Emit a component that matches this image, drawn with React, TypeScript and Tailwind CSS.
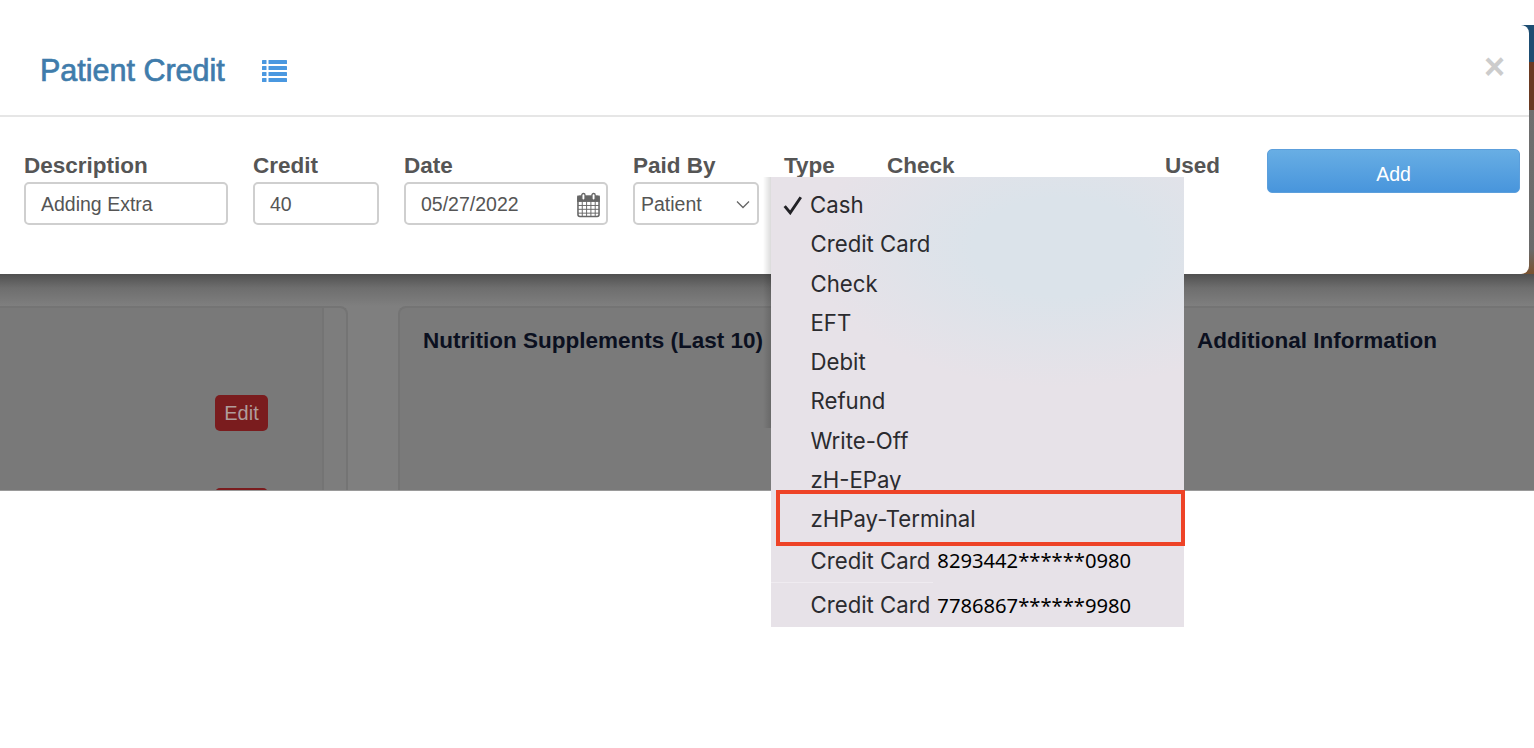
// App.tsx
// Patient Credit modal with the native Type select menu open.

import React from 'react';

const menuItems = ['Credit Card', 'Check', 'EFT', 'Debit', 'Refund', 'Write-Off', 'zH-EPay', 'zHPay-Terminal'];

const Label: React.FC<{ text: string; className?: string }> = ({ text, className }) => (
  <div className={`h-[29px] text-[22.5px] leading-[26px] font-bold text-[#555555] ${className ?? ''}`}>{text}</div>
);

const inputBox =
  'h-[43px] pt-[2px] rounded-[5px] border-2 border-[#cfcfcf] bg-white flex items-center text-[19.5px] text-[#555555]';

const CalendarIcon = () => (
  <svg width="23" height="26" viewBox="0 0 24 26" fill="none" stroke="#666666">
    <rect x="1" y="4" width="22" height="21" rx="2" strokeWidth="1.6" />
    <rect x="1" y="4" width="22" height="5" fill="#666666" strokeWidth="1.6" />
    <path d="M1 13.5H23M1 17.5H23M1 21.5H23M5.5 9V25M10 9V25M14.5 9V25M19 9V25" strokeWidth="1" />
    <rect x="5" y="1" width="3.4" height="7" rx="1.7" fill="#ffffff" strokeWidth="1.4" />
    <rect x="15.6" y="1" width="3.4" height="7" rx="1.7" fill="#ffffff" strokeWidth="1.4" />
  </svg>
);

const ListIcon = () => (
  <svg className="ml-[37px]" width="25" height="22" viewBox="0 0 25 22" fill="#4a98e0">
    <rect x="0" y="0" width="4.5" height="4" rx="0.6" />
    <rect x="0" y="6" width="4.5" height="4" rx="0.6" />
    <rect x="0" y="12" width="4.5" height="4" rx="0.6" />
    <rect x="0" y="18" width="4.5" height="4" rx="0.6" />
    <rect x="6.5" y="0" width="18.5" height="4" rx="0.6" />
    <rect x="6.5" y="6" width="18.5" height="4" rx="0.6" />
    <rect x="6.5" y="12" width="18.5" height="4" rx="0.6" />
    <rect x="6.5" y="18" width="18.5" height="4" rx="0.6" />
  </svg>
);

const App: React.FC = () => {
  return (
    <div className="relative w-[1534px] h-[748px] overflow-hidden bg-white font-['Liberation_Sans',Arial,sans-serif]">
      <div className="h-[25px]" />

      {/* Dimmed page behind the modal */}
      <div className="h-[466px] overflow-hidden bg-[#7f7f7f] border-b border-[#9a9a9a]">
        <div className="h-[249px] bg-[linear-gradient(to_bottom,#1d4d72_0,#1d4d72_37px,#6a3a22_37px,#6a3a22_85px,#6f6f6f_85px,#6a6a6a_225px,#7a5230_249px)]">
          <div className="w-[1529px] h-[249px] bg-white rounded-r-[8px]">
            <div className="h-[92px] border-b-2 border-[#e6e6e6] pt-[2px] pl-[40px] pr-[24px] flex items-center">
              <h1 className="text-[30.5px] font-normal text-[#3f7cab] [-webkit-text-stroke:0.7px_#3f7cab]">
                Patient Credit
              </h1>
              <ListIcon />
              <span className="ml-auto -mt-[8px] text-[36px] leading-none font-bold text-[#cccccc]">×</span>
            </div>

            <div className="flex items-start pl-[24px] pt-[36px]">
              <div className="w-[204px]">
                <Label text="Description" />
                <div className={`${inputBox} pl-[15px]`}>Adding Extra</div>
              </div>
              <div className="w-[126px] ml-[25px]">
                <Label text="Credit" />
                <div className={`${inputBox} pl-[15px]`}>40</div>
              </div>
              <div className="w-[204px] ml-[25px]">
                <Label text="Date" />
                <div className={`${inputBox} pl-[15px] pr-[6px] justify-between`}>
                  05/27/2022
                  <CalendarIcon />
                </div>
              </div>
              <div className="w-[126px] ml-[25px]">
                <Label text="Paid By" />
                <div className={`${inputBox} pl-[6px] pr-[6px] justify-between`}>
                  Patient
                  <svg width="16" height="9" viewBox="0 0 16 9" fill="none" stroke="#666666" strokeWidth="1.3">
                    <path d="M2 1.5L8 7.5L14 1.5" />
                  </svg>
                </div>
              </div>
              <Label text="Type" className="ml-[25px] w-[103px]" />
              <Label text="Check" className="w-[278px]" />
              <Label text="Used" className="w-[102px]" />
              <button className="w-[253px] h-[44px] -mt-[4px] pt-[8px] rounded-[5px] border border-[#5c9fdc] bg-[linear-gradient(to_bottom,#68aee4,#4895dc)] text-[19.5px] text-white">
                Add
              </button>
            </div>
          </div>
        </div>

        {/* Page content under the backdrop */}
        <div className="h-[216px] pt-[32px] flex items-start bg-[linear-gradient(to_bottom,#505050_0,#6e6e6e_14px,#7f7f7f_32px)]">
          <div className="w-[348px] h-[200px] flex rounded-tr-[8px] border-r-2 border-t-2 border-[#747474] bg-[#7d7d7d]">
            <div className="w-[324px] border-r-2 border-[#747474] bg-[#797979] flex flex-col items-end pr-[54px] pt-[87px] gap-[57px]">
              <span className="w-[53px] h-[36px] shrink-0 rounded-[5px] bg-[#7a1c1e] flex items-center justify-center text-[20px] text-[#b09c9c]">
                Edit
              </span>
              <span className="w-[53px] h-[36px] shrink-0 rounded-[5px] bg-[#7a1c1e]" />
            </div>
          </div>
          <div className="ml-[50px] flex-1 h-[200px] rounded-tl-[8px] border-l-2 border-t-2 border-[#747474] bg-[#7a7a7a] pl-[23px] pt-[20px] flex text-[22.5px] leading-[26px] font-bold text-[#0b1020]">
            <span className="w-[774px]">Nutrition Supplements (Last 10)</span>
            <span>Additional Information</span>
          </div>
        </div>
      </div>

      {/* Open select menu */}
      <div className="absolute left-[771px] top-[177px] w-[413px] h-[450px] pt-[8px] bg-[#e7e2e8] bg-[radial-gradient(ellipse_250px_140px_at_290px_70px,#dbe3ea_35%,#e7e2e8_100%)] font-['Inter',sans-serif] text-[22.2px] text-[#2b2b2f]">
        <div className="absolute -left-[8px] top-0 w-[8px] h-[251px] bg-[linear-gradient(to_right,rgba(0,0,0,0),rgba(0,0,0,0.14))]" />
        <div className="h-[39.3px] flex items-center">
          <svg className="ml-[12px] mr-[7px]" width="20" height="20" viewBox="0 0 18 18" fill="none" stroke="#222226" strokeWidth="2.6">
            <path d="M1.5 10L6.5 16L16 2" />
          </svg>
          Cash
        </div>
        {menuItems.map(item => (
          <div key={item} className="h-[39.3px] flex items-center pl-[39.5px]">
            {item}
          </div>
        ))}
        <div className="h-[43px] flex items-center pl-[39.5px]">
          Credit Card
          <span className="ml-[7px] font-['Noto_Sans',sans-serif] text-[20.2px] text-black">8293442******0980</span>
        </div>
        <div className="h-px w-[162px] -mb-px bg-[#efebf0]" />
        <div className="h-[46px] flex items-center pl-[39.5px]">
          Credit Card
          <span className="ml-[7px] font-['Noto_Sans',sans-serif] text-[20.2px] text-black">7786867******9980</span>
        </div>
      </div>

      {/* Annotation around the new option */}
      <div className="absolute left-[776px] top-[490px] w-[409px] h-[56px] border-[4px] border-[#ee4327]" />
    </div>
  );
};

export default App;
